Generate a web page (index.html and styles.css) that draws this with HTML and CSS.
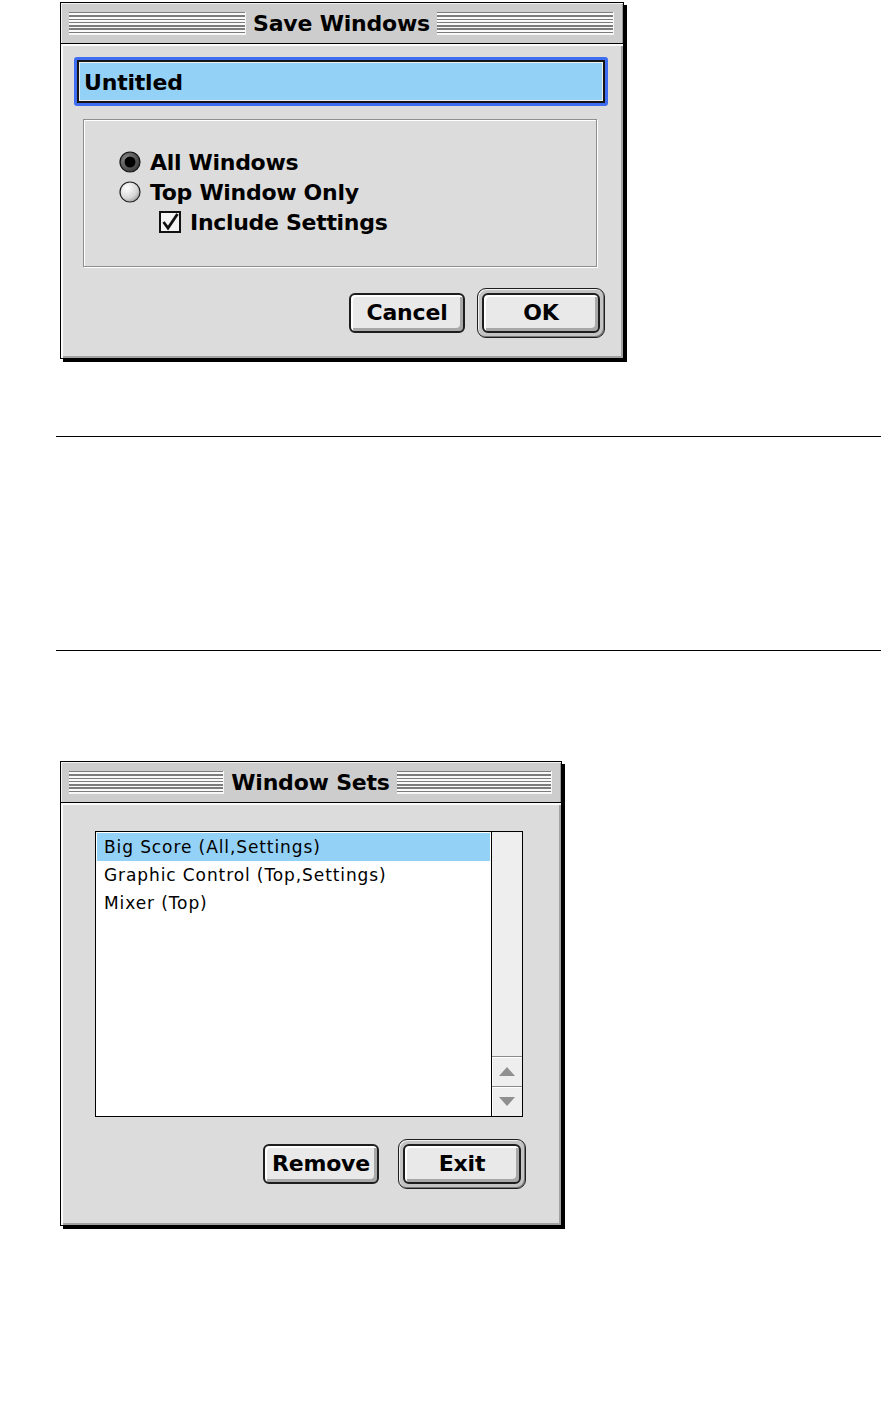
FILE: index.html
```html
<!DOCTYPE html>
<html>
  <head>
    <meta charset="utf-8">
    <title>Save Windows</title>
    <link rel="stylesheet" href="styles.css">
  </head>
  <body>
    <div class="page">

      <div class="window save">
        <div class="titlebar">
          <span class="stripes"></span>
          <span class="title">Save Windows</span>
          <span class="stripes"></span>
        </div>
        <div class="body">
          <div class="field">
            <div class="field-inner">Untitled</div>
          </div>
          <div class="group">
            <div class="option">
              <svg class="radio" width="22" height="22" viewBox="0 0 22 22">
                <defs>
                  <radialGradient id="ron" cx="0.35" cy="0.35" r="0.8">
                    <stop offset="0" stop-color="#8a8a8a"/>
                    <stop offset="1" stop-color="#2e2e2e"/>
                  </radialGradient>
                </defs>
                <circle cx="11" cy="11" r="10" fill="url(#ron)" stroke="#111" stroke-width="1.2"/>
                <circle cx="11" cy="11" r="5.5" fill="#000"/>
              </svg>
              <span>All Windows</span>
            </div>
            <div class="option">
              <svg class="radio" width="22" height="22" viewBox="0 0 22 22">
                <defs>
                  <radialGradient id="roff" cx="0.35" cy="0.3" r="0.85">
                    <stop offset="0" stop-color="#ffffff"/>
                    <stop offset="0.6" stop-color="#d6d6d6"/>
                    <stop offset="1" stop-color="#8a8a8a"/>
                  </radialGradient>
                </defs>
                <circle cx="11" cy="11" r="10" fill="url(#roff)" stroke="#222" stroke-width="1.2"/>
              </svg>
              <span>Top Window Only</span>
            </div>
            <div class="option sub">
              <svg class="check" width="22" height="22" viewBox="0 0 22 22">
                <rect x="1" y="1" width="20" height="20" fill="#f4f4f4" stroke="#111" stroke-width="2"/>
                <path d="M4.5 11 L9 17 L18.5 3" fill="none" stroke="#111" stroke-width="2.8"/>
              </svg>
              <span>Include Settings</span>
            </div>
          </div>
          <div class="buttons save-buttons">
            <button class="btn">Cancel</button>
            <span class="default"><button class="btn">OK</button></span>
          </div>
        </div>
      </div>

      <div class="rule first"></div>
      <div class="rule second"></div>

      <div class="window sets">
        <div class="titlebar">
          <span class="stripes"></span>
          <span class="title">Window Sets</span>
          <span class="stripes"></span>
        </div>
        <div class="body">
          <div class="list">
            <div class="items">
              <div class="row selected">Big Score (All,Settings)</div>
              <div class="row">Graphic Control (Top,Settings)</div>
              <div class="row">Mixer (Top)</div>
            </div>
            <div class="scrollbar">
              <div class="track"></div>
              <div class="arrow">
                <svg width="16" height="9" viewBox="0 0 16 9"><path d="M0 9 L8 0 L16 9 Z" fill="#8f8f8f"/></svg>
              </div>
              <div class="arrow">
                <svg width="16" height="9" viewBox="0 0 16 9"><path d="M0 0 L16 0 L8 9 Z" fill="#8f8f8f"/></svg>
              </div>
            </div>
          </div>
          <div class="buttons sets-buttons">
            <button class="btn">Remove</button>
            <span class="default"><button class="btn">Exit</button></span>
          </div>
        </div>
      </div>

    </div>
  </body>
</html>
```

FILE: styles.css
```css
* {box-sizing: border-box;}

body {
  margin: 0;
  background: #fff;
  font-family: "DejaVu Sans", Verdana, sans-serif;
  color: #000;
}

.page {
  padding-left: 56px;
  padding-bottom: 100px;
}

/* windows */

.window {
  margin-left: 4px;
  border: 1px solid #000;
  box-shadow: 3px 3px 0 #000;
  background: #dcdcdc;
}

.save {
  margin-top: 2px;
  width: 564px;
}

.sets {
  margin-top: 110px;
  width: 502px;
}

.titlebar {
  height: 41px;
  display: flex;
  align-items: center;
  gap: 7px;
  padding: 0 9px 0 8px;
  background: #cdcdcd;
  border-bottom: 1px solid #000;
  box-shadow: inset 1px 1px 0 #f2f2f2, inset -1px 0 0 #9a9a9a;
}

.stripes {
  flex: 1;
  height: 23px;
  background: repeating-linear-gradient(to bottom, #7c7c7c 0, #7c7c7c 1.4px, #fafafa 1.4px, #fafafa 3.3px);
  border-right: 1px solid #f5f5f5;
  border-bottom: 1px solid #f5f5f5;
}

.title {
  font-weight: bold;
  font-size: 22px;
  letter-spacing: -0.2px;
}

.body {
  box-shadow: inset 2px 2px 0 #fbfbfb, inset -2px -2px 0 #a2a2a2;
}

.save .body {
  padding: 13px 15px 20px 13px;
}

.sets .body {
  padding: 28px 35px 36px 34px;
}

/* text field */

.field {
  height: 49px;
  border: 3px solid #3f6df2;
  border-radius: 3px;
}

.field-inner {
  height: 43px;
  border: 2px solid #151515;
  box-shadow: inset 0 0 0 1px #f0f0f0;
  background: #94d1f6;
  padding-left: 5px;
  font-weight: bold;
  font-size: 22px;
  line-height: 41px;
  letter-spacing: -0.2px;
}

/* options group */

.group {
  margin: 13px 11px 0 9px;
  height: 148px;
  border: 1px solid #8e8e8e;
  box-shadow: inset 1px 1px 0 #fff, 1px 1px 0 #fff;
  padding: 27px 0 0 35px;
}

.option {
  height: 30px;
  display: flex;
  align-items: center;
  gap: 9px;
  font-weight: bold;
  font-size: 22px;
  letter-spacing: -0.3px;
}

.option.sub {
  padding-left: 40px;
}

.radio, .check {
  flex: none;
}

/* buttons */

.buttons {
  display: flex;
  justify-content: flex-end;
  align-items: center;
}

.save-buttons {
  margin: 21px 3px 0 0;
  gap: 12px;
}

.sets-buttons {
  margin-top: 22px;
  gap: 19px;
}

.btn {
  width: 116px;
  height: 40px;
  border: 2px solid #1e1e1e;
  border-radius: 6px;
  background: #e9e9e9;
  box-shadow: inset 2px 2px 0 #fff, inset -3px -3px 0 #a8a8a8;
  font-family: "DejaVu Sans", Verdana, sans-serif;
  font-weight: bold;
  font-size: 22px;
  letter-spacing: -0.2px;
  color: #000;
  padding: 0 0 2px 0;
}

.default {
  display: flex;
  width: 128px;
  height: 50px;
  padding: 4px;
  border: 1px solid #1e1e1e;
  border-radius: 9px;
  background: #c4c4c4;
  box-shadow: inset 1px 1px 0 #f0f0f0, inset -1px -1px 0 #777;
}

.default .btn {
  width: 118px;
  height: 40px;
}

/* list */

.list {
  display: flex;
  height: 286px;
  margin-right: 3px;
  border: 1px solid #000;
  background: #fff;
}

.items {
  flex: 1;
  padding: 1px;
}

.row {
  height: 28px;
  line-height: 28px;
  padding-left: 7px;
  font-size: 17px;
  letter-spacing: 0.9px;
}

.row.selected {
  background: #94d1f6;
}

.scrollbar {
  width: 31px;
  border-left: 1px solid #000;
  background: #eeeeee;
  display: flex;
  flex-direction: column;
}

.track {
  flex: 1;
}

.arrow {
  height: 30px;
  border-top: 1px solid #8a8a8a;
  display: flex;
  align-items: center;
  justify-content: center;
  box-shadow: inset 1px 1px 0 #fff;
}

/* rules */

.rule {
  border-top: 1px solid #000;
}

.rule.first {
  margin-top: 77px;
}

.rule.second {
  margin-top: 213px;
}
```
